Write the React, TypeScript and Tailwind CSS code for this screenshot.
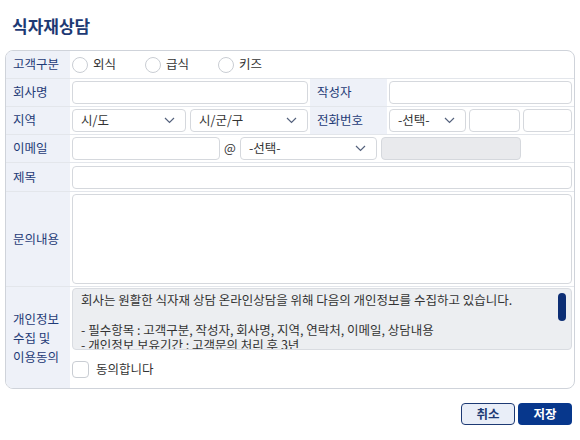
import React from "react";

const font = { fontFamily: '"Noto Sans CJK KR", "Noto Sans", sans-serif' };

const Chevron = () => (
  <svg width="11" height="7" viewBox="0 0 11 7" className="shrink-0">
    <polyline points="1,1 5.5,5.5 10,1" fill="none" stroke="#55627d" strokeWidth="1.2" />
  </svg>
);

const Input = ({ className = "" }: { className?: string }) => (
  <div className={`h-[23px] rounded-[4px] border border-[#d5d8dd] bg-white ${className}`} />
);

const Select = ({ label, className = "" }: { label: string; className?: string }) => (
  <div
    className={`flex h-[23px] items-center justify-between rounded-[4px] border border-[#d5d8dd] bg-white pl-[8px] pr-[10px] text-[12.5px] text-[#333] ${className}`}
  >
    <span>{label}</span>
    <Chevron />
  </div>
);

const Label = ({ children, className = "" }: { children: React.ReactNode; className?: string }) => (
  <div className={`flex items-center bg-[#eef1f8] px-[7px] text-[12.5px] text-[#1f3b77] ${className}`}>
    {children}
  </div>
);

const Radio = ({ label, width }: { label: string; width: string }) => (
  <div className={`flex items-center gap-[5px] ${width}`}>
    <span className="h-[16px] w-[16px] rounded-full border border-[#c9cdd3] bg-white" />
    <span className="text-[12.5px] text-[#333]">{label}</span>
  </div>
);

export default function App() {
  return (
    <div className="min-h-[440px] w-[580px] bg-white px-[5px]" style={font}>
      <h1 className="ml-[7px] pt-[15px] text-[17px] font-bold leading-[22px] text-[#1d3a74]">식자재상담</h1>

      <div className="mt-[13px] overflow-hidden rounded-[8px] border border-[#cfd3da]">
        {/* 고객구분 */}
        <div className="flex h-[28px] border-b border-[#e3e6eb]">
          <Label className="w-[64px]">고객구분</Label>
          <div className="flex flex-1 items-center pl-[2px]">
            <Radio label="외식" width="w-[73px]" />
            <Radio label="급식" width="w-[73px]" />
            <Radio label="키즈" width="w-[73px]" />
          </div>
        </div>

        {/* 회사명 / 작성자 */}
        <div className="flex h-[28px] border-b border-[#e3e6eb]">
          <Label className="w-[64px]">회사명</Label>
          <div className="flex w-[240px] items-center pl-[2px] pr-[2px]">
            <Input className="w-full" />
          </div>
          <Label className="w-[77px]">작성자</Label>
          <div className="flex flex-1 items-center pl-[2px] pr-[2px]">
            <Input className="w-full" />
          </div>
        </div>

        {/* 지역 / 전화번호 */}
        <div className="flex h-[28px] border-b border-[#e3e6eb]">
          <Label className="w-[64px]">지역</Label>
          <div className="flex w-[240px] items-center gap-[4px] pl-[2px] pr-[2px]">
            <Select label="시/도" className="w-[114px]" />
            <Select label="시/군/구" className="flex-1" />
          </div>
          <Label className="w-[77px]">전화번호</Label>
          <div className="flex flex-1 items-center gap-[3px] pl-[2px] pr-[2px]">
            <Select label="-선택-" className="w-[77px]" />
            <Input className="w-[51px]" />
            <Input className="flex-1" />
          </div>
        </div>

        {/* 이메일 */}
        <div className="flex h-[28px] border-b border-[#e3e6eb]">
          <Label className="w-[64px]">이메일</Label>
          <div className="flex flex-1 items-center pl-[2px] pr-[2px]">
            <Input className="w-[148px]" />
            <span className="w-[20px] text-center text-[12.5px] text-[#333]">@</span>
            <Select label="-선택-" className="w-[137px]" />
            <div className="ml-[4px] h-[23px] w-[140px] rounded-[4px] border border-[#d5d8dd] bg-[#e9eaed]" />
          </div>
        </div>

        {/* 제목 */}
        <div className="flex h-[29px] border-b border-[#e3e6eb]">
          <Label className="w-[64px]">제목</Label>
          <div className="flex flex-1 items-center pl-[2px] pr-[2px]">
            <Input className="w-full" />
          </div>
        </div>

        {/* 문의내용 */}
        <div className="flex h-[95px] border-b border-[#e3e6eb]">
          <Label className="w-[64px]">문의내용</Label>
          <div className="flex flex-1 items-center pl-[2px] pr-[2px]">
            <div className="h-[90px] w-full rounded-[4px] border border-[#d5d8dd] bg-white" />
          </div>
        </div>

        {/* 개인정보 */}
        <div className="flex h-[101px]">
          <Label className="w-[64px] leading-[19px]">
            개인정보
            <br />
            수집 및
            <br />
            이용동의
          </Label>
          <div className="flex flex-1 flex-col pl-[2px] pr-[2px] pt-[1px]">
            <div className="relative h-[62px] overflow-hidden rounded-[4px] border border-[#d9dce1] bg-[#eceef1] pl-[8px] pt-[3px] text-[12.5px] leading-[15px] text-[#333]">
              <p>회사는 원활한 식자재 상담 온라인상담을 위해 다음의 개인정보를 수집하고 있습니다.</p>
              <p>&nbsp;</p>
              <p>- 필수항목 : 고객구분, 작성자, 회사명, 지역, 연락처, 이메일, 상담내용</p>
              <p>- 개인정보 보유기간 : 고객문의 처리 후 3년</p>
              <span className="absolute right-[5px] top-[4px] h-[28px] w-[8px] rounded-full bg-[#0c2e74]" />
            </div>
            <div className="mt-[10px] flex items-center gap-[7px]">
              <span className="h-[17px] w-[17px] rounded-[4px] border border-[#c9cdd3] bg-white" />
              <span className="text-[12.5px] text-[#333]">동의합니다</span>
            </div>
          </div>
        </div>
      </div>

      <div className="mr-[3px] mt-[14px] flex justify-end gap-[3px]">
        <button className="h-[22px] w-[54px] rounded-[4px] border-[1.5px] border-[#1d3a74] bg-[#e9eef8] text-[12.5px] font-bold text-[#1d3a74]">
          취소
        </button>
        <button className="h-[22px] w-[54px] rounded-[4px] bg-[#07378c] text-[12.5px] font-bold text-white">
          저장
        </button>
      </div>
    </div>
  );
}
